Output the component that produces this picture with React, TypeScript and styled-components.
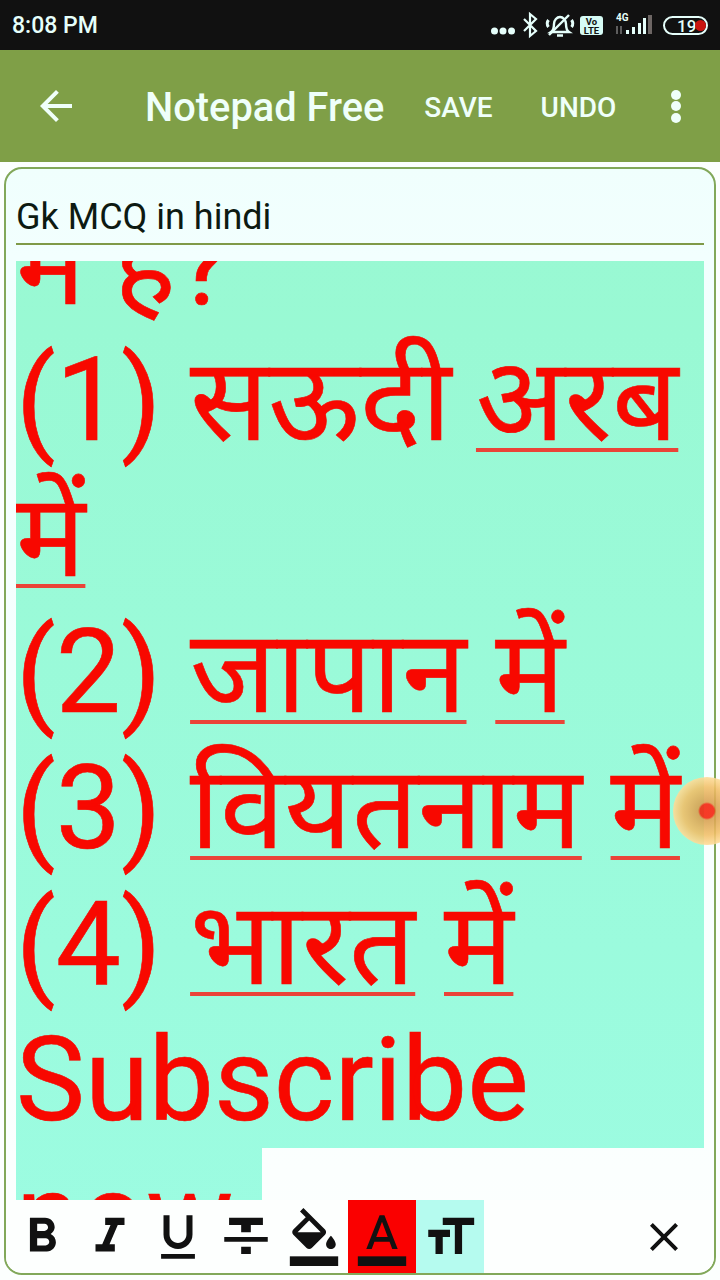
import React from "react";
import styled, { createGlobalStyle } from "styled-components";

const GlobalStyle = createGlobalStyle`
  html, body {
    margin: 0;
    padding: 0;
    background: #ffffff;
    font-family: "Roboto", "Noto Sans", sans-serif;
  }
  * {
    box-sizing: border-box;
  }
`;

const Screen = styled.div`
  position: relative;
  width: 720px;
  height: 1280px;
  display: flex;
  flex-direction: column;
  overflow: hidden;
  background: #fcfffe;
`;

const StatusBar = styled.div`
  height: 50px;
  flex: none;
  display: flex;
  align-items: center;
  justify-content: space-between;
  padding: 0 12px;
  background: #111111;
  color: #e6fffb;
`;

const Clock = styled.span`
  font-size: 23px;
  font-weight: 500;
`;

const StatusIcons = styled.div`
  display: flex;
  align-items: center;
`;

const Header = styled.header`
  height: 112px;
  flex: none;
  display: flex;
  align-items: center;
  padding: 0 20px 0 32px;
  background: #7f9f47;
  color: #effffa;
`;

const BackButton = styled.div`
  width: 48px;
  height: 48px;
  margin-right: 65px;
`;

const Title = styled.h1`
  margin: 3px 40px 0 0;
  font-size: 39.8px;
  font-weight: 500;
  white-space: nowrap;
`;

const Action = styled.span`
  margin: 2px 48px 0 0;
  font-size: 28px;
  font-weight: 500;
`;

const More = styled.div`
  display: flex;
  flex-direction: column;
  gap: 1.5px;
  margin-left: 7px;
`;

const Dot = styled.i`
  display: block;
  width: 10px;
  height: 10px;
  border-radius: 50%;
  background: #effffa;
`;

const Card = styled.main`
  flex: none;
  height: 1108px;
  margin: 5px 4px 0;
  display: flex;
  flex-direction: column;
  border: 2px solid #82a85a;
  border-radius: 18px;
  background: linear-gradient(#f0fffd 0, #f2fffe 90px, #fcfffe 100%);
  overflow: hidden;
`;

const NoteTitle = styled.div`
  height: 76px;
  flex: none;
  margin: 0 10px;
  padding-top: 27px;
  border-bottom: 2px solid #7f9a48;
  color: #0d1a12;
  font-size: 36px;
  line-height: 42px;
`;

const Editor = styled.div`
  flex: none;
  height: 939px;
  margin: 16px 10px 0;
  overflow: hidden;
`;

const EditorText = styled.div`
  margin-top: -65px;
  color: #f80800;
  font-family: "Roboto", "Noto Sans Devanagari", "Noto Sans", sans-serif;
  font-size: 116px;
  line-height: 136px;
  -webkit-text-stroke: 0.6px #f80800;
`;

const Line = styled.div<{ $short?: boolean }>`
  height: 136px;
  width: ${({ $short }) => ($short ? "246px" : "100%")};
  background: linear-gradient(#98f8cf, #9cfce2) fixed;
  white-space: nowrap;
`;

const Word = styled.span`
  text-decoration: underline;
  text-decoration-color: #ea4338;
  text-decoration-thickness: 4px;
  text-decoration-skip-ink: none;
  text-underline-offset: 8px;
`;

const TightWord = styled.span`
  margin-right: -4px;
`;

const Toolbar = styled.div`
  flex: 1;
  display: flex;
  align-items: stretch;
  padding: 0 2px;
  background: #fdfffe;
`;

const ToolButton = styled.div<{ $bg?: string }>`
  width: 68px;
  display: flex;
  align-items: center;
  justify-content: center;
  background: ${({ $bg }) => $bg || "transparent"};
`;

const CloseButton = styled.div`
  margin-left: auto;
  width: 48px;
  margin-right: 24px;
  display: flex;
  align-items: center;
`;

const TouchMark = styled.div`
  position: absolute;
  left: 673px;
  top: 777px;
  width: 68px;
  height: 68px;
  border-radius: 50%;
  background: radial-gradient(circle, #f5200a 0 7px, #d8a050 9px, #f2bf68 24px, #ffdc98 34px);
  opacity: 0.88;
`;

const Tool = ({ d, bar }: { d: string; bar?: boolean }) => (
  <svg width="58" height="58" viewBox="0 0 24 24" fill="#111111">
    <path d={d} />
    {bar && <rect x="2" y="20" width="20" height="4" />}
  </svg>
);

const App = () => (
  <Screen>
    <GlobalStyle />
    <StatusBar>
      <Clock>8:08 PM</Clock>
      <StatusIcons>
        <svg width="217" height="34" viewBox="0 0 217 34" fill="none">
          <circle cx="3.5" cy="23" r="3.5" fill="#e6fffb" />
          <circle cx="12" cy="23" r="3.5" fill="#e6fffb" />
          <circle cx="20.5" cy="23" r="3.5" fill="#e6fffb" />
          <path d="M33 11l12 12-6 5V6l6 5-12 12" stroke="#e6fffb" strokeWidth="2.2" />
          <path
            d="M60 24c3-2 3-5 3-8 0-4 3-7 6-7s6 3 6 7c0 3 0 6 3 8zM66 27.5h6"
            stroke="#e6fffb"
            strokeWidth="2.4"
          />
          <path d="M57.5 12c-1.5 2-1.5 5 0 7M80.5 12c1.5 2 1.5 5 0 7" stroke="#e6fffb" strokeWidth="3" />
          <path d="M58 27L78 7" stroke="#e6fffb" strokeWidth="2.4" />
          <rect x="89" y="8" width="23" height="19" rx="3" fill="#d6fbf5" />
          <text x="100.5" y="16.5" textAnchor="middle" fontSize="9.5" fontWeight="700" fill="#111111" fontFamily="Roboto">Vo</text>
          <text x="100.5" y="25.5" textAnchor="middle" fontSize="9.5" fontWeight="700" fill="#111111" fontFamily="Roboto">LTE</text>
          <text x="125" y="13" fontSize="10" fontWeight="700" fill="#e6fffb" fontFamily="Roboto">4G</text>
          <path d="M126 18v8M130 18v8" stroke="#777777" strokeWidth="1.5" />
          <path d="M135 26v-4h3v4zM141 26v-7h3v7zM147 26v-11h3v11zM152 26v-16h3v16z" fill="#e6fffb" />
          <rect x="157" y="7" width="4" height="19" fill="#6d6664" />
          <rect x="173" y="9" width="43" height="17" rx="8.5" stroke="#e6fffb" strokeWidth="2" />
          <text x="186" y="23.5" fontSize="17" fontWeight="500" fill="#e6fffb" fontFamily="Roboto">19</text>
          <circle cx="209.5" cy="17.5" r="5.5" fill="#c8140f" />
        </svg>
      </StatusIcons>
    </StatusBar>
    <Header>
      <BackButton>
        <svg width="48" height="48" viewBox="0 0 24 24" fill="#effffa">
          <path d="M20 11H7.83l5.59-5.59L12 4l-8 8 8 8 1.41-1.41L7.83 13H20v-2z" />
        </svg>
      </BackButton>
      <Title>Notepad Free</Title>
      <Action>SAVE</Action>
      <Action>UNDO</Action>
      <More>
        <Dot />
        <Dot />
        <Dot />
      </More>
    </Header>
    <Card>
      <NoteTitle>Gk MCQ in hindi</NoteTitle>
      <Editor>
        <EditorText>
          <Line>में है?</Line>
          <Line>(1) <TightWord>सऊदी</TightWord> <Word>अरब</Word></Line>
          <Line><Word>में</Word></Line>
          <Line>(2) <Word>जापान</Word> <Word>में</Word></Line>
          <Line>(3) <Word>वियतनाम</Word> <Word>में</Word></Line>
          <Line>(4) <Word>भारत</Word> <Word>में</Word></Line>
          <Line>Subscribe</Line>
          <Line $short>now</Line>
        </EditorText>
      </Editor>
      <Toolbar>
        <ToolButton>
          <Tool d="M15.6 10.79c.97-.67 1.65-1.77 1.65-2.79 0-2.26-1.75-4-4-4H7v14h7.04c2.09 0 3.71-1.7 3.71-3.79 0-1.52-.86-2.82-2.15-3.42zM10 6.5h3c.83 0 1.5.67 1.5 1.5s-.67 1.5-1.5 1.5h-3v-3zm3.5 9H10v-3h3.5c.83 0 1.5.67 1.5 1.5s-.67 1.5-1.5 1.5z" />
        </ToolButton>
        <ToolButton>
          <Tool d="M10 4v3h2.21l-3.42 8H6v3h8v-3h-2.21l3.42-8H18V4z" />
        </ToolButton>
        <ToolButton>
          <Tool d="M12 17c3.31 0 6-2.69 6-6V3h-2.5v8c0 1.93-1.57 3.5-3.5 3.5S8.5 12.93 8.5 11V3H6v8c0 3.31 2.69 6 6 6zm-7 2v2h14v-2H5z" />
        </ToolButton>
        <ToolButton>
          <Tool d="M10 19h4v-3h-4v3zM5 4v3h5v3h4V7h5V4H5zM3 14h18v-2H3v2z" />
        </ToolButton>
        <ToolButton>
          <Tool bar d="M16.56 8.94L7.62 0 6.21 1.41l2.38 2.38-5.15 5.15c-.59.59-.59 1.54 0 2.12l5.5 5.5c.29.29.68.44 1.06.44s.77-.15 1.06-.44l5.5-5.5c.59-.58.59-1.53 0-2.12zM5.21 10L10 5.21 14.79 10H5.21zM19 11.5s-2 2.17-2 3.5c0 1.1.9 2 2 2s2-.9 2-2c0-1.33-2-3.5-2-3.5z" />
        </ToolButton>
        <ToolButton $bg="#fa0000">
          <Tool bar d="M11 3L5.5 17h2.25l1.12-3h6.25l1.12 3h2.25L13 3h-2zm-1.38 9L12 5.67 14.38 12H9.62z" />
        </ToolButton>
        <ToolButton $bg="#b5fbef">
          <Tool d="M9 4v3h5v12h3V7h5V4H9zm-6 8h3v7h3v-7h3V9H3v3z" />
        </ToolButton>
        <CloseButton>
          <svg width="48" height="48" viewBox="0 0 24 24" fill="#111111">
            <path d="M19 6.41L17.59 5 12 10.59 6.41 5 5 6.41 10.59 12 5 17.59 6.41 19 12 13.41 17.59 19 19 17.59 13.41 12z" />
          </svg>
        </CloseButton>
      </Toolbar>
    </Card>
    <TouchMark />
  </Screen>
);

export default App;
